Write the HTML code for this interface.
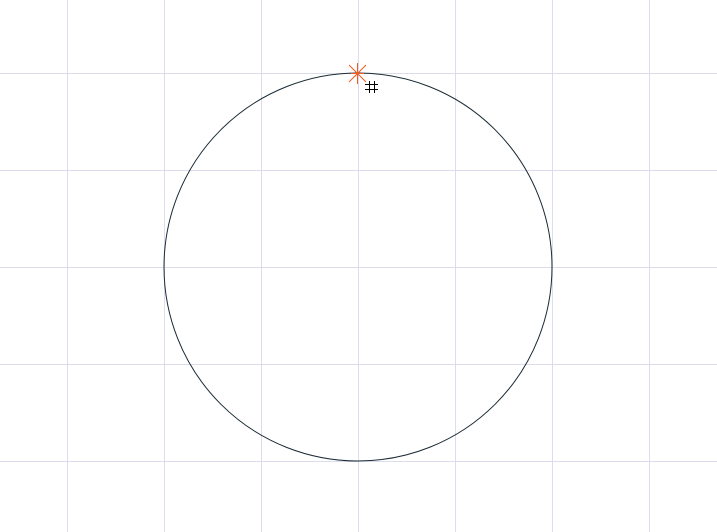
<!DOCTYPE html>
<html><head><meta charset="utf-8"><style>
html,body{margin:0;padding:0;background:#fff;width:717px;height:532px;overflow:hidden}
</style></head><body>
<svg width="717" height="532" xmlns="http://www.w3.org/2000/svg">
<g stroke="#dcdcec" stroke-width="1">
<line x1="67.5" y1="0" x2="67.5" y2="532"/>
<line x1="164.5" y1="0" x2="164.5" y2="532"/>
<line x1="261.5" y1="0" x2="261.5" y2="532"/>
<line x1="358.5" y1="0" x2="358.5" y2="532"/>
<line x1="455.5" y1="0" x2="455.5" y2="532"/>
<line x1="552.5" y1="0" x2="552.5" y2="532"/>
<line x1="649.5" y1="0" x2="649.5" y2="532"/>
<line x1="0" y1="73.5" x2="717" y2="73.5"/>
<line x1="0" y1="170.5" x2="717" y2="170.5"/>
<line x1="0" y1="267.5" x2="717" y2="267.5"/>
<line x1="0" y1="364.5" x2="717" y2="364.5"/>
<line x1="0" y1="461.5" x2="717" y2="461.5"/>
</g>
<circle cx="358" cy="267" r="194" fill="none" stroke="#1a2a33" stroke-width="1"/>
<g stroke="#f05a1e" stroke-width="1">
<line x1="357.5" y1="63" x2="357.5" y2="84"/>
<line x1="349" y1="65" x2="366" y2="82"/>
<line x1="366" y1="65" x2="349" y2="82"/>
<line x1="351" y1="73.5" x2="364" y2="73.5"/>
</g>
<g stroke="#000" stroke-width="1">
<line x1="369.5" y1="81" x2="369.5" y2="93"/>
<line x1="374.5" y1="81" x2="374.5" y2="93"/>
<line x1="365" y1="84.5" x2="378" y2="84.5"/>
<line x1="365" y1="89.5" x2="378" y2="89.5"/>
</g>
</svg>
</body></html>
